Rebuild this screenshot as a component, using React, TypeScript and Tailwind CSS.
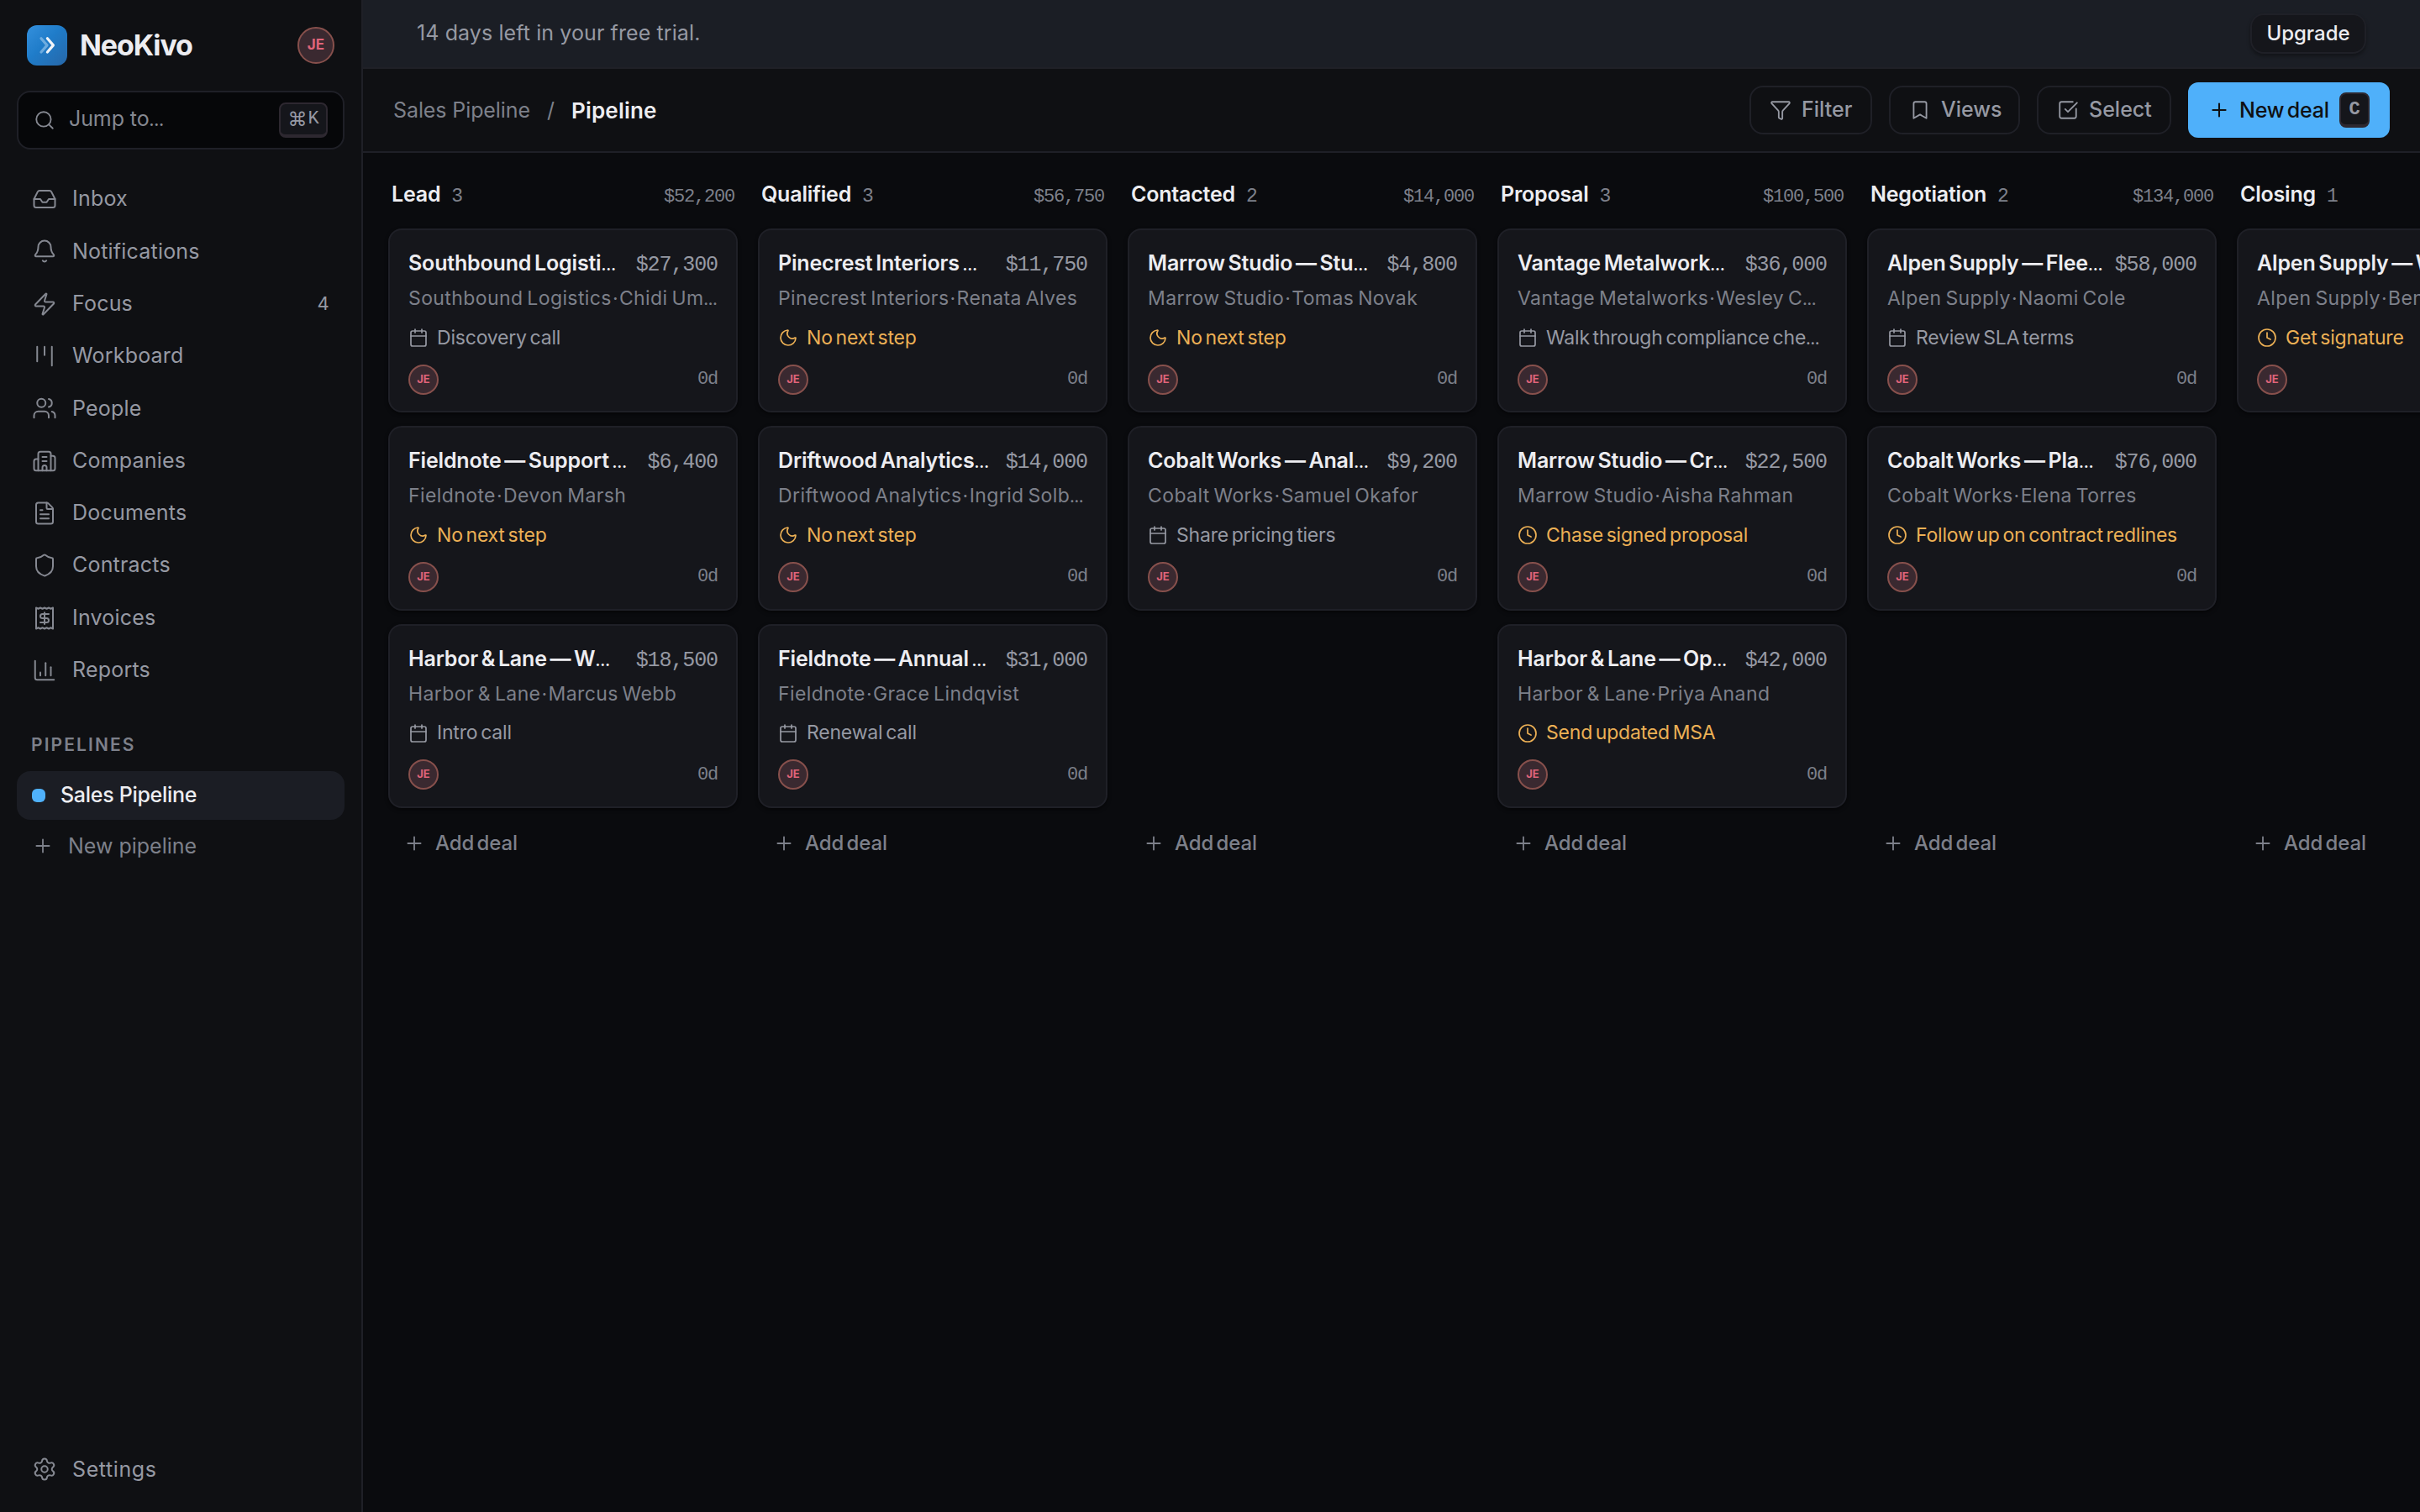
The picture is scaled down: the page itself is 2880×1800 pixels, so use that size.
import React from 'react';
import {
    Bell,
    Bookmark,
    Building2,
    Calendar,
    ChartColumn,
    Clock,
    FileText,
    Funnel,
    Inbox,
    Kanban,
    Moon,
    Plus,
    Receipt,
    Search,
    Settings,
    Shield,
    SquareCheckBig,
    Users,
    Zap,
    type LucideIcon,
} from 'lucide-react';

type StepKind = 'planned' | 'due' | 'none';

interface Deal {
    title: string;
    amount: string;
    contact: string;
    step: string;
    kind: StepKind;
}

interface Stage {
    name: string;
    total: string;
    deals: Deal[];
}

const NAV: { label: string; icon: LucideIcon; count?: number }[] = [
    { label: 'Inbox', icon: Inbox },
    { label: 'Notifications', icon: Bell },
    { label: 'Focus', icon: Zap, count: 4 },
    { label: 'Workboard', icon: Kanban },
    { label: 'People', icon: Users },
    { label: 'Companies', icon: Building2 },
    { label: 'Documents', icon: FileText },
    { label: 'Contracts', icon: Shield },
    { label: 'Invoices', icon: Receipt },
    { label: 'Reports', icon: ChartColumn },
];

const STAGES: Stage[] = [
    {
        name: 'Lead',
        total: '$52,200',
        deals: [
            { title: 'Southbound Logisti…', amount: '$27,300', contact: 'Southbound Logistics·Chidi Um…', step: 'Discovery call', kind: 'planned' },
            { title: 'Fieldnote — Support …', amount: '$6,400', contact: 'Fieldnote·Devon Marsh', step: 'No next step', kind: 'none' },
            { title: 'Harbor & Lane — W…', amount: '$18,500', contact: 'Harbor & Lane·Marcus Webb', step: 'Intro call', kind: 'planned' },
        ],
    },
    {
        name: 'Qualified',
        total: '$56,750',
        deals: [
            { title: 'Pinecrest Interiors …', amount: '$11,750', contact: 'Pinecrest Interiors·Renata Alves', step: 'No next step', kind: 'none' },
            { title: 'Driftwood Analytics…', amount: '$14,000', contact: 'Driftwood Analytics·Ingrid Solb…', step: 'No next step', kind: 'none' },
            { title: 'Fieldnote — Annual …', amount: '$31,000', contact: 'Fieldnote·Grace Lindqvist', step: 'Renewal call', kind: 'planned' },
        ],
    },
    {
        name: 'Contacted',
        total: '$14,000',
        deals: [
            { title: 'Marrow Studio — Stu…', amount: '$4,800', contact: 'Marrow Studio·Tomas Novak', step: 'No next step', kind: 'none' },
            { title: 'Cobalt Works — Anal…', amount: '$9,200', contact: 'Cobalt Works·Samuel Okafor', step: 'Share pricing tiers', kind: 'planned' },
        ],
    },
    {
        name: 'Proposal',
        total: '$100,500',
        deals: [
            { title: 'Vantage Metalwork…', amount: '$36,000', contact: 'Vantage Metalworks·Wesley C…', step: 'Walk through compliance che…', kind: 'planned' },
            { title: 'Marrow Studio — Cr…', amount: '$22,500', contact: 'Marrow Studio·Aisha Rahman', step: 'Chase signed proposal', kind: 'due' },
            { title: 'Harbor & Lane — Op…', amount: '$42,000', contact: 'Harbor & Lane·Priya Anand', step: 'Send updated MSA', kind: 'due' },
        ],
    },
    {
        name: 'Negotiation',
        total: '$134,000',
        deals: [
            { title: 'Alpen Supply — Flee…', amount: '$58,000', contact: 'Alpen Supply·Naomi Cole', step: 'Review SLA terms', kind: 'planned' },
            { title: 'Cobalt Works — Pla…', amount: '$76,000', contact: 'Cobalt Works·Elena Torres', step: 'Follow up on contract redlines', kind: 'due' },
        ],
    },
    {
        name: 'Closing',
        total: '$88,000',
        deals: [
            { title: 'Alpen Supply — War…', amount: '$88,000', contact: 'Alpen Supply·Ben Fischer', step: 'Get signature', kind: 'due' },
        ],
    },
];

const STEP_ICON: Record<StepKind, LucideIcon> = { planned: Calendar, due: Clock, none: Moon };

const Clipped: React.FC<{ text: string }> = ({ text }) => {
    if (!text.endsWith('…')) return <>{text}</>;
    return (
        <>
            {text.slice(0, -1)}
            <span className="text-[0.7em] font-bold">…</span>
        </>
    );
};

const Logo: React.FC = () => (
    <svg width="48" height="48" viewBox="0 0 48 48" fill="none" className="shrink-0">
        <defs>
            <linearGradient id="logo-fill" x1="0" y1="0" x2="48" y2="48" gradientUnits="userSpaceOnUse">
                <stop stopColor="#3490dd" />
                <stop offset="0.45" stopColor="#1f7cc9" />
                <stop offset="1" stopColor="#2767a8" />
            </linearGradient>
        </defs>
        <rect width="48" height="48" rx="12" fill="url(#logo-fill)" />
        <g strokeWidth="3.2" strokeLinecap="round" strokeLinejoin="round">
            <path d="M17 15.8 24 23.9 17 32" stroke="#7db5e3" strokeOpacity="0.85" />
            <path d="M24.4 15.8 31.4 23.9 24.4 32" stroke="#f1f4f8" />
        </g>
    </svg>
);

const Sidebar: React.FC = () => (
    <aside className="w-[432px] shrink-0 flex flex-col border-r-2 border-[#1f2027] bg-[#0f1013] px-5 text-[25px] text-[#9699a3]">
        <div className="flex items-center h-[108px] px-3">
            <Logo />
            <span className="ml-[15px] mb-0.5 flex-1 text-[34px] font-bold tracking-[-1.1px] text-[#ededf1]">NeoKivo</span>
            <div className="size-11 flex items-center justify-center rounded-full border-2 border-[#87504c] bg-[#3a2930] text-[17px] font-bold text-[#e0647a]">
                JE
            </div>
        </div>

        <div className="flex items-center h-[70px] pl-[18px] pr-[18px] rounded-2xl border-2 border-[#1f2027] bg-[#060709] text-[#858891]">
            <Search size={26} strokeWidth={1.7} />
            <span className="ml-4 mb-0.5 flex-1 tracking-[-0.1px]">
                <Clipped text="Jump to…" />
            </span>
            <kbd className="flex items-center justify-center w-[58px] h-[42px] gap-px rounded-lg border-2 border-b-4 border-[#2d2830] bg-[#15161b] font-['Liberation_Mono',monospace] text-[22px] leading-none text-[#9699a3]">
                <span className="font-['DejaVu_Sans',sans-serif] text-[23px]">⌘</span>K
            </kbd>
        </div>

        <nav className="mt-[30px] flex flex-col gap-1">
            {NAV.map(({ label, icon: Icon, count }) => (
                <div key={label} className="flex items-center h-[58.3px] pl-[18px] pr-[18px] tracking-[0.2px]">
                    <Icon size={30} strokeWidth={1.6} className="text-[#858891]" />
                    <span className="ml-[18px] flex-1">{label}</span>
                    {count && <span className="text-[22px]">{count}</span>}
                </div>
            ))}
        </nav>

        <div className="mt-[30px] flex items-center h-[60px] pl-[17px] text-[21px] font-semibold tracking-[2.1px] text-[#7d808a]">PIPELINES</div>
        <div className="mt-px flex items-center h-[58px] pl-[18px] rounded-2xl bg-[#1b1d24] font-medium tracking-[-0.3px] text-[#ededf1]">
            <span className="size-4 rounded-[6px] bg-[#4fb0fa]"></span>
            <span className="ml-[18px]">Sales Pipeline</span>
        </div>
        <div className="mt-0.5 flex items-center h-[58px] pl-[18px] text-[#7d808a]">
            <Plus size={26} strokeWidth={1.7} />
            <span className="mt-px ml-[17px]">New pipeline</span>
        </div>

        <div className="mt-auto mb-[22px] flex items-center h-[58px] pl-[18px]">
            <Settings size={30} strokeWidth={1.6} className="text-[#858891]" />
            <span className="mt-px ml-[18px] tracking-[0.6px]">Settings</span>
        </div>
    </aside>
);

const TrialBanner: React.FC = () => (
    <div className="flex items-center justify-between h-[82px] border-b-2 border-[#1f2027] bg-[#1b1e25] pl-16 pr-16 text-[25px]">
        <span className="tracking-[0.1px] text-[#9699a3]">14 days left in your free trial.</span>
        <button className="w-[138px] h-[48px] rounded-2xl border-2 border-[#1f2027] bg-[#15161b] text-[24px] font-medium text-[#ededf1] shadow-[0_3px_4px_rgba(0,0,0,0.35)]">
            Upgrade
        </button>
    </div>
);

const Toolbar: React.FC = () => (
    <header className="flex items-center h-[100px] border-b-2 border-[#1f2027] bg-[#0f1013] px-9 text-[25px] text-[#9699a3]">
        <div className="mt-px flex flex-1 items-center text-[#7d808a]">
            <span className="tracking-[-0.1px]">Sales Pipeline</span>
            <span className="ml-5">/</span>
            <span className="ml-5 text-[26px] font-semibold tracking-[0.2px] text-[#ededf1]">Pipeline</span>
        </div>
        <div className="flex items-center gap-5 font-medium">
            <button className="flex items-center w-[146px] h-[58px] pl-[22px] gap-[12px] rounded-2xl border-2 border-[#1f2027]">
                <Funnel size={26} strokeWidth={1.7} />
                Filter
            </button>
            <button className="flex items-center w-[156px] h-[58px] pl-[22px] gap-3 rounded-2xl border-2 border-[#1f2027]">
                <Bookmark size={26} strokeWidth={1.7} />
                Views
            </button>
            <button className="flex items-center w-[160px] h-[58px] pl-[22px] gap-[12px] rounded-2xl border-2 border-[#1f2027]">
                <SquareCheckBig size={26} strokeWidth={1.7} />
                Select
            </button>
            <button className="flex items-center w-[240px] h-[66px] px-6 rounded-xl bg-[#4fb0fa] text-[#0f1013]">
                <Plus size={26} strokeWidth={1.9} />
                <span className="mt-px ml-[11px] mr-auto tracking-[-0.2px] [word-spacing:-3px]">New deal</span>
                <kbd className="flex items-center justify-center w-9 h-[42px] rounded-lg border-2 border-b-4 border-[#2d2830] bg-[#15161b] font-['Liberation_Mono',monospace] text-[22px] font-bold text-[#9699a3]">
                    C
                </kbd>
            </button>
        </div>
    </header>
);

const DealCard: React.FC<{ deal: Deal }> = ({ deal }) => {
    const StepIcon = STEP_ICON[deal.kind];
    const [company, person] = deal.contact.split('·');
    return (
        <article className="h-[219.25px] px-[22px] pt-[22px] rounded-2xl border-2 border-[#1f2027] bg-[#15161b] shadow-[0_2px_4px_rgba(0,0,0,0.5)] whitespace-nowrap">
            <div className="flex items-baseline justify-between h-[34px] leading-[34px]">
                <span className="text-[25px] font-semibold tracking-[-0.17px] [word-spacing:-2.4px] text-[#ededf1]">
                    <Clipped text={deal.title} />
                </span>
                <span className="font-['Liberation_Mono',monospace] text-[25px] tracking-[-1.1px] text-[#9699a3]">{deal.amount}</span>
            </div>
            <div className="mt-[10px] h-[31px] leading-[31px] text-[23px] tracking-[0.4px] [word-spacing:-2px] text-[#7d808a]">
                {company}
                <span className="mx-px">·</span>
                <Clipped text={person} />
            </div>
            <div className={`mt-4 flex items-center h-[30px] gap-[10px] text-[23px] tracking-[-0.2px] [word-spacing:-2.5px] ${deal.kind === 'planned' ? 'text-[#9699a3]' : 'text-[#ecb055]'}`}>
                <StepIcon size={24} strokeWidth={1.7} />
                <span>
                    <Clipped text={deal.step} />
                </span>
            </div>
            <div className="mt-[16.5px] flex items-center justify-between">
                <div className="size-9 flex items-center justify-center rounded-full border-2 border-[#87504c] bg-[#3a2930] text-[13px] font-bold text-[#e0647a]">
                    JE
                </div>
                <span className="font-['Liberation_Mono',monospace] text-[22px] tracking-[-1.2px] text-[#7d808a]">0d</span>
            </div>
        </article>
    );
};

const Column: React.FC<{ stage: Stage }> = ({ stage }) => (
    <section className="w-[416px] shrink-0 flex flex-col">
        <div className="flex items-baseline h-[42px] mb-5 px-1 leading-[42px]">
            <h2 className="text-[25px] font-semibold tracking-[-0.2px] text-[#ededf1]">{stage.name}</h2>
            <span className="ml-[13px] font-['Liberation_Mono',monospace] text-[23px] text-[#7d808a]">{stage.deals.length}</span>
            <span className="ml-auto font-['Liberation_Mono',monospace] text-[22px] tracking-[-1.2px] text-[#7d808a]">{stage.total}</span>
        </div>
        <div className="flex-1 flex flex-col gap-4">
            {stage.deals.map((deal) => (
                <DealCard key={deal.title} deal={deal} />
            ))}
        </div>
        <button className="mt-4 flex items-center h-[52px] pl-[18px] gap-3 text-[24px] font-medium tracking-[-0.1px] [word-spacing:-3px] text-[#7d808a]">
            <Plus size={26} strokeWidth={1.7} />
            Add deal
        </button>
    </section>
);

const App: React.FC = () => (
    <div className="flex w-full h-screen overflow-hidden bg-[#0a0b0e] font-[Inter,sans-serif]">
        <Sidebar />
        <main className="flex-1 min-w-0 flex flex-col">
            <TrialBanner />
            <Toolbar />
            <div className="flex gap-6 pl-[30px] pt-7 overflow-hidden">
                {STAGES.map((stage) => (
                    <Column key={stage.name} stage={stage} />
                ))}
            </div>
        </main>
    </div>
);

export default App;
